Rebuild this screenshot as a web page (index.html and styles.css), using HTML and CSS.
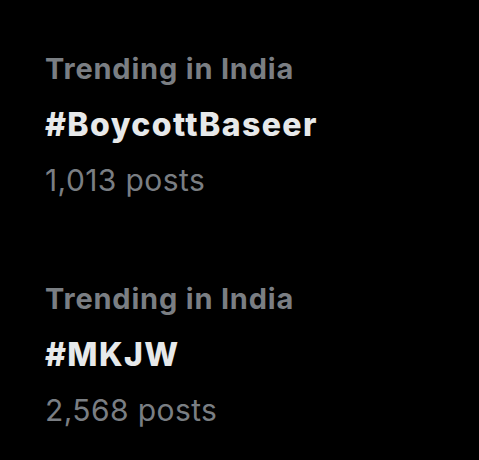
FILE: index.html
```html
<!DOCTYPE html>
<html lang="en">
<head>
  <meta charset="UTF-8" />
  <meta name="viewport" content="width=device-width, initial-scale=1.0"/>
  <title>Trending</title>
  <link rel="stylesheet" href="styles.css">
</head>
<body>

<div class="trends">
  <div class="trend">
    <div class="trend-label">Trending in India</div>
    <div class="trend-tag">#BoycottBaseer</div>
    <div class="trend-count">1,013 posts</div>
  </div>

  <div class="trend">
    <div class="trend-label">Trending in India</div>
    <div class="trend-tag">#MKJW</div>
    <div class="trend-count">2,568 posts</div>
  </div>
</div>

</body>
</html>
```

FILE: styles.css
```css
body {
  margin: 0;
  background: #000;
  font-family: Inter, "Noto Sans", sans-serif;
  color: #e7e9ea;
  height: 460px;
  overflow: hidden;
}
.trends {
  padding: 52px 0 0 45px;
  display: flex;
  flex-direction: column;
  gap: 84px;
}
.trend {
  display: flex;
  flex-direction: column;
}
.trend-label {
  font-size: 29px;
  font-weight: 700;
  color: #7a7e83;
  line-height: 34px;
  letter-spacing: 0.8px;
}
.trend-tag {
  font-size: 32px;
  font-weight: 800;
  color: #e7e9ea;
  line-height: 38px;
  letter-spacing: 1.4px;
  margin-top: 20px;
}
.trend-count {
  font-size: 30px;
  font-weight: 400;
  color: #7a7e83;
  line-height: 36px;
  letter-spacing: 0.4px;
  margin-top: 18px;
}
```
